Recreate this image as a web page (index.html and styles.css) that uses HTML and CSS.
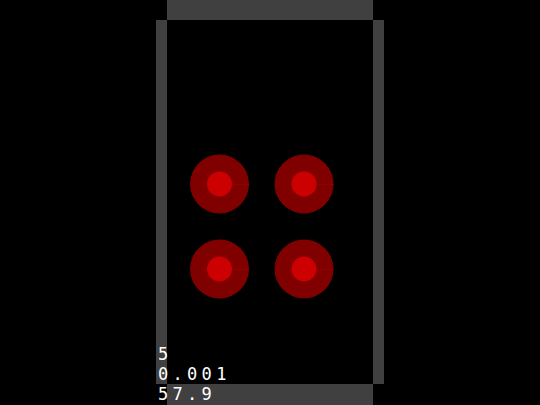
FILE: index.html
```html
<!DOCTYPE html>
<html>
<head>
<meta charset="utf-8">
<link rel="stylesheet" href="styles.css">
</head>
<body>
<div class="frame">
  <div class="bar top"></div>
  <div class="bar left"></div>
  <div class="stage">
    <svg class="canvas" width="206" height="364" viewBox="0 0 206 364">
      <g>
        <circle cx="52.5" cy="164" r="29.5" fill="#800000"/>
        <circle cx="52.5" cy="164" r="12.5" fill="#cc0000"/>
        <line x1="65" y1="164.5" x2="82" y2="164.5" stroke="#940000" stroke-width="1"/>
      </g>
      <g>
        <circle cx="137" cy="164" r="29.5" fill="#800000"/>
        <circle cx="137" cy="164" r="12.5" fill="#cc0000"/>
        <line x1="149.5" y1="164.5" x2="166.5" y2="164.5" stroke="#940000" stroke-width="1"/>
      </g>
      <g>
        <circle cx="52.5" cy="249" r="29.5" fill="#800000"/>
        <circle cx="52.5" cy="249" r="12.5" fill="#cc0000"/>
        <line x1="65" y1="249.5" x2="82" y2="249.5" stroke="#940000" stroke-width="1"/>
      </g>
      <g>
        <circle cx="137" cy="249" r="29.5" fill="#800000"/>
        <circle cx="137" cy="249" r="12.5" fill="#cc0000"/>
        <line x1="149.5" y1="249.5" x2="166.5" y2="249.5" stroke="#940000" stroke-width="1"/>
      </g>
    </svg>
  </div>
  <div class="bar right"></div>
  <div class="bar bottom"></div>
  <div class="readout">
    <div>5</div>
    <div>0.001</div>
    <div>57.9</div>
  </div>
</div>
</body>
</html>
```
FILE: styles.css
```css
html, body {
  margin: 0;
  padding: 0;
  background: #000;
  width: 540px;
  height: 405px;
  overflow: hidden;
}
.frame {
  position: relative;
  margin-left: 156px;
  width: 228px;
  display: grid;
  grid-template-columns: 11px 206px 11px;
  grid-template-rows: 20px 364px 21px;
}
.bar {
  background: #404040;
}
.top {
  grid-column: 2;
  grid-row: 1;
}
.left {
  grid-column: 1;
  grid-row: 2;
}
.stage {
  grid-column: 2;
  grid-row: 2;
  background: #000;
}
.canvas {
  display: block;
}
.right {
  grid-column: 3;
  grid-row: 2;
}
.bottom {
  grid-column: 2;
  grid-row: 3;
}
.readout {
  position: absolute;
  left: 2px;
  top: 344px;
  font-family: "DejaVu Sans Mono", monospace;
  font-size: 17px;
  line-height: 20px;
  letter-spacing: 4.3px;
  color: #fff;
}
```
